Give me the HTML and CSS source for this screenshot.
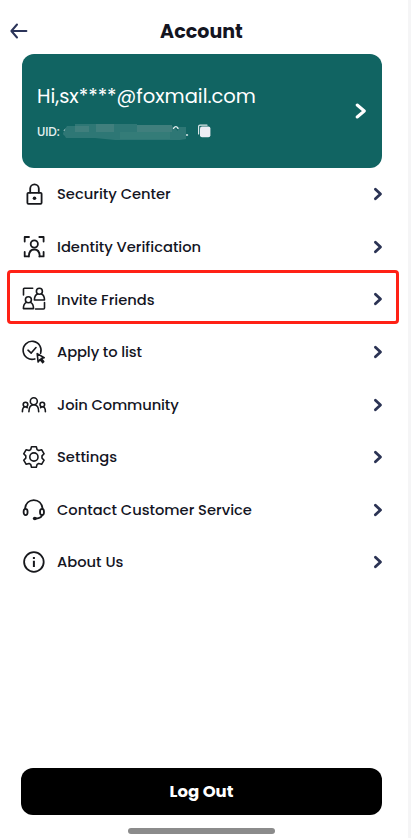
FILE: index.html
```html
<!DOCTYPE html>
<html lang="en">
<head>
<meta charset="utf-8">
<title>Account</title>
<link rel="stylesheet" href="styles.css">
</head>
<body>
<div class="screen">
  <header class="topbar">
    <svg class="back" viewBox="0 0 18 16"><path d="M16.4 8H1.6M7 1.5 1.4 8 7 14.5"/></svg>
    <h1 class="title">Account</h1>
  </header>
  <section class="card">
    <div class="profile">
      <div class="name">Hi,sx****@foxmail.com</div>
      <div class="uid">
        <span class="uid-label">UID:</span>
        <svg class="mask" viewBox="0 0 126 18">
          <path class="digit" d="M4 5.5 1.4 7.5 4 9M1.4 11 4 13M123.5 12h1"/>
          <path class="m1" d="M4 3h8V1h62v1h35v1l6 5v-4h8v12l-6 1H52l-20-2H3L0 10z"/>
          <path class="m2" d="M12 3h14v6H12zM33 1h18v8H33zM74 2h35v7H74z"/>
          <path class="m3" d="M57 9h50v7H57z"/>
          <path class="digit" d="M110.5 5.3q2.500-3.300 4.500 0"/>
        </svg>
        <svg class="copy" viewBox="0 0 14 14"><path class="sheet-back" d="M1.6 10V2.6q0-1.4 1.4-1.4H10"/><rect class="sheet" x="3" y="2.4" width="10.4" height="10.8" rx="2"/></svg>
      </div>
    </div>
    <svg class="card-chevron" viewBox="0 0 12 16"><path d="M2.2 2 9.3 8 2.2 14"/></svg>
  </section>
  <nav class="menu">
    <a class="row"><svg class="icon" viewBox="0 0 28 28"><rect x="7.4" y="12.8" width="14.2" height="11" rx="1"/><path d="M10.2 12.5V8.600a4.3 4.3 0 0 1 8.6 0v3.9"/><circle class="fill" cx="14.5" cy="18.3" r="1.8"/></svg><span class="label">Security Center</span><svg class="chevron" viewBox="0 0 10 14"><path d="M2.4 2.2 7.5 7 2.4 11.8"/></svg></a>
    <a class="row"><svg class="icon" viewBox="0 0 28 28"><path d="M4.7 8.5V4H9M19.3 4h4.3v4.5M4.7 19v4.4H9M19.3 23.4h4.3V19M8.9 23.5c0-4.7 2.3-7 5.4-7s5.4 2.3 5.4 7"/><circle cx="14.3" cy="11" r="3.6"/></svg><span class="label">Identity Verification</span><svg class="chevron" viewBox="0 0 10 14"><path d="M2.4 2.2 7.5 7 2.4 11.8"/></svg></a>
    <a class="row highlighted"><svg class="icon thin" viewBox="0 0 28 28"><path d="M3.5 10V4q0-.8.8-.8h8.4M24.5 17.5V23q0 1-1 1h-8"/><circle cx="19.4" cy="6.3" r="3"/><path d="M17.4 9c-2 1-3 3.2-3 6h10.1c0-2.8-1-5-3-6"/><circle cx="8.4" cy="14.7" r="3"/><path d="M6.4 17.4c-2 1-3 3.2-3 6.2h10.1c0-3-1-5.2-3-6.2"/></svg><span class="label">Invite Friends</span><svg class="chevron" viewBox="0 0 10 14"><path d="M2.4 2.2 7.5 7 2.4 11.8"/></svg></a>
    <a class="row"><svg class="icon thin" viewBox="0 0 28 28"><path d="M14.8 20.9a9 9 0 1 1 5.8-5.6M8 12.2l3.2 2.9L16 9.5"/><path d="m17.2 15.6 7 4.1-3 .9 2.5 3-1.1 1-2.6-3-1.9 2.4z"/></svg><span class="label tight">Apply to list</span><svg class="chevron" viewBox="0 0 10 14"><path d="M2.4 2.2 7.5 7 2.4 11.8"/></svg></a>
    <a class="row"><svg class="icon thin" viewBox="0 0 28 28"><circle cx="13.8" cy="10.2" r="3.5"/><path d="M8.9 20.8c0-4.5 1.8-7 4.9-7s4.9 2.5 4.9 7M2.4 20.8c0-3.4 1.1-5 3-5q1 0 1.8.8M25.4 20.8c0-3.4-1.1-5-3-5q-1 0-1.8.8"/><circle cx="5.5" cy="13.5" r="2.3"/><circle cx="22.3" cy="13.5" r="2.3"/></svg><span class="label tight">Join Community</span><svg class="chevron" viewBox="0 0 10 14"><path d="M2.4 2.2 7.5 7 2.4 11.8"/></svg></a>
    <a class="row"><svg class="icon thin" viewBox="0 0 28 28"><circle cx="13.9" cy="14" r="4.1"/><path d="M11.5 3.7h4.8l.8 2.9 1.6.9 2.9-.8 2.5 4.1-2.1 2.1v2.2l2.1 2.1-2.5 4.1-2.9-.8-1.6.9-.8 2.9h-4.8l-.8-2.9-1.6-.9-2.9.8-2.5-4.1 2.1-2.1v-2.2l-2.1-2.1 2.5-4.1 2.9.8 1.6-.9z"/></svg><span class="label">Settings</span><svg class="chevron" viewBox="0 0 10 14"><path d="M2.4 2.2 7.5 7 2.4 11.8"/></svg></a>
    <a class="row"><svg class="icon" viewBox="0 0 28 28"><path d="M5 12.7C5.6 7.4 9.2 4.2 13.8 4.2s8.2 3.2 8.8 8.5M22.1 19.3q-1.5 3.2-7 3.2"/><ellipse cx="5.6" cy="16" rx="2" ry="3.2"/><ellipse cx="22" cy="16" rx="2" ry="3.2"/><ellipse class="fill" cx="14.8" cy="22.5" rx="2" ry="1.7"/></svg><span class="label">Contact Customer Service</span><svg class="chevron" viewBox="0 0 10 14"><path d="M2.4 2.2 7.5 7 2.4 11.8"/></svg></a>
    <a class="row"><svg class="icon" viewBox="0 0 28 28"><circle cx="13.9" cy="14" r="9.8"/><path class="stem" d="M13.9 12.8v6.2M13.9 9v2"/></svg><span class="label">About Us</span><svg class="chevron" viewBox="0 0 10 14"><path d="M2.4 2.2 7.5 7 2.4 11.8"/></svg></a>
  </nav>
  <footer class="footer">
    <button class="logout">Log Out</button>
    <div class="home-bar"></div>
  </footer>
</div>
</body>
</html>
```
FILE: styles.css
```css
* { box-sizing: border-box; }
body { margin: 0; background: #f5f5f6; font-family: Poppins, Inter, sans-serif; color: #14151f; }
svg { display: block; flex: none; fill: none; stroke-linecap: round; stroke-linejoin: round; }
.screen { width: 408px; height: 838px; padding: 0 26px 0 21px; background: #fff; display: flex; flex-direction: column; overflow: hidden; }
.topbar { height: 54px; display: flex; align-items: center; padding-top: 8px; }
.back { width: 18px; height: 16px; margin-left: -11px; margin-right: -7px; stroke: #2b3459; stroke-width: 2; }
.title { flex: 1; margin: 2px 0 0; text-align: center; font-size: 19px; font-weight: 700; line-height: 24px; letter-spacing: .05px; }
.card { height: 113.5px; margin: 0 0 .5px .5px; border-radius: 12px; background: #116462; color: #fff; display: flex; justify-content: space-between; padding: 29px 15px 0 15.5px; }
.name { font-size: 19.5px; line-height: 27px; white-space: nowrap; }
.uid { display: flex; align-items: center; height: 18px; margin-top: 12px; font-size: 12px; font-weight: 500; color: #e3efef; }
.uid-label { width: 26px; padding-top: 1px; letter-spacing: -.1px; }
.mask { width: 126px; height: 18px; margin-top: 2px; }
.digit { stroke: #e8f1f1; stroke-width: 1.4; }
.m1 { fill: #2e7775; }
.m2 { fill: #407f7d; }
.m3 { fill: #347c78; }
.copy { width: 14px; height: 14px; margin-left: 8px; }
.sheet { fill: #ececf3; }
.sheet-back { stroke: #dce7e9; stroke-width: 1.2; }
.card-chevron { width: 12px; height: 16px; margin-top: 20px; stroke: #fff; stroke-width: 3; }
.menu { display: flex; flex-direction: column; }
.row { position: relative; height: 52.57px; display: flex; align-items: center; }
.highlighted::after { content: ""; position: absolute; inset: -3px -17px 2px -14px; border: 3px solid #ff2116; border-radius: 4px; }
.icon { width: 28px; height: 28px; margin-left: -1px; stroke: #17181c; stroke-width: 1.8; }
.thin { stroke-width: 1.6; }
.fill { fill: #17181c; stroke: none; }
.stem { stroke-linecap: butt; stroke-width: 2; }
.label { flex: 1; margin: .4px 0 0 9px; font-size: 14.7px; font-weight: 500; line-height: 22px; white-space: nowrap; }
.tight { letter-spacing: -.1px; }
.chevron { width: 10px; height: 14px; margin-right: -1px; stroke: #2b3354; stroke-width: 2.8; }
.footer { margin-top: auto; height: 70px; display: flex; flex-direction: column; align-items: center; }
.logout { width: 100%; height: 47px; border: 0; border-radius: 12px; background: #000; color: #fff; font: 700 16.5px/24px Poppins, Inter, sans-serif; padding: 1px 0 0; }
.home-bar { width: 147px; height: 6px; margin-top: 13px; border-radius: 3px; background: #8b8b8b; }
```
